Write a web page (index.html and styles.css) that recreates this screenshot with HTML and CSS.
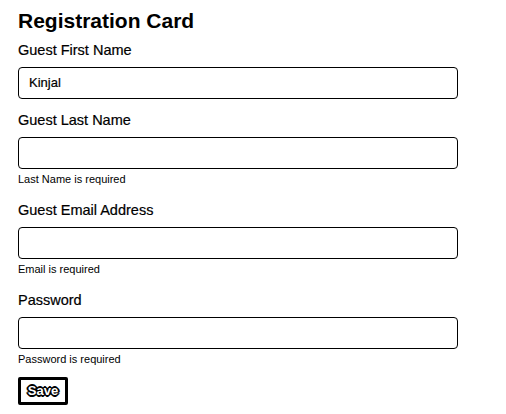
FILE: index.html
```html
<!DOCTYPE html>
<html>
<head>
<meta charset="utf-8">
<link rel="stylesheet" href="styles.css">
</head>
<body>
<div class="card">
  <h1 class="title">Registration Card</h1>
  <div class="field">
    <label class="label">Guest First Name</label>
    <div class="input">Kinjal</div>
  </div>
  <div class="field">
    <label class="label">Guest Last Name</label>
    <div class="input"></div>
    <div class="error">Last Name is required</div>
  </div>
  <div class="field">
    <label class="label">Guest Email Address</label>
    <div class="input"></div>
    <div class="error">Email is required</div>
  </div>
  <div class="field">
    <label class="label">Password</label>
    <div class="input"></div>
    <div class="error">Password is required</div>
  </div>
  <button class="save">Save</button>
</div>
</body>
</html>
```
FILE: styles.css
```css
* { box-sizing: border-box; }
body {
  margin: 0;
  background: #fff;
  color: #000;
  font-family: "Liberation Sans", Arial, sans-serif;
}
.card {
  padding: 9px 18px;
  width: 476px;
}
.title {
  margin: 0 0 9px 0;
  font-size: 21px;
  font-weight: bold;
  line-height: 24px;
}
.field {
  display: flex;
  flex-direction: column;
  margin-bottom: 13px;
}
.label {
  font-size: 14.5px;
  line-height: 17px;
  margin-bottom: 8px;
  -webkit-text-stroke: 0.2px #000;
}
.input {
  width: 440px;
  height: 32px;
  border: 1px solid #000;
  border-radius: 4px;
  padding: 0 10px;
  font-size: 13px;
  line-height: 30px;
  -webkit-text-stroke: 0.2px #000;
}
.error {
  font-size: 11px;
  line-height: 13px;
  margin-top: 4px;
  margin-bottom: 3px;
}
.save {
  display: block;
  margin-top: -5px;
  width: 50px;
  height: 28px;
  padding: 0;
  border: 3px solid #000;
  border-radius: 2px;
  background: #fff;
  color: #fff;
  font-family: "Liberation Sans", Arial, sans-serif;
  font-weight: bold;
  font-size: 13px;
  line-height: 22px;
  text-align: center;
  text-shadow: 0 0 2px #000, 1px 1px 0 #000, -1px -1px 0 #000, 1px -1px 0 #000, -1px 1px 0 #000, 2px 0 0 #000, -2px 0 0 #000, 0 2px 0 #000, 0 -2px 0 #000;
}
```
